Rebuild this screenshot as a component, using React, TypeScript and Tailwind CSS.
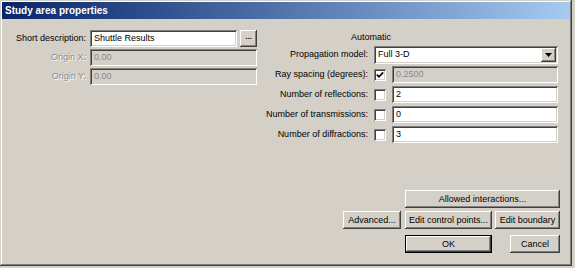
import React from 'react';

const raised =
  'shadow-[inset_-1px_-1px_0_#404040,inset_1px_1px_0_#ffffff,inset_-2px_-2px_0_#808080,inset_2px_2px_0_#d4d0c8]';
const sunken =
  'shadow-[inset_1px_1px_0_#808080,inset_-1px_-1px_0_#ffffff,inset_2px_2px_0_#404040,inset_-2px_-2px_0_#d4d0c8]';

function Field({ value, disabled, className }: { value: string; disabled?: boolean; className?: string }) {
  return (
    <div
      className={`h-[17px] flex items-center pl-[4px] ${sunken} ${
        disabled ? 'bg-[#d4d0c8] text-[#8a8a8a]' : 'bg-white text-black'
      } ${className ?? ''}`}
    >
      {value}
    </div>
  );
}

function Check({ checked }: { checked?: boolean }) {
  return (
    <div className={`w-[12px] h-[12px] bg-white flex items-center justify-center ${sunken}`}>
      {checked && (
        <svg width="8" height="8" viewBox="0 0 8 8">
          <polyline points="0.8,3.6 3,5.8 7.2,1.4" fill="none" stroke="#000" strokeWidth="1.7" />
        </svg>
      )}
    </div>
  );
}

function Btn({ label, w, isDefault }: { label: string; w: string; isDefault?: boolean }) {
  if (isDefault) {
    return (
      <div className={`${w} h-[18px] border border-black bg-[#d4d0c8]`}>
        <div className={`w-full h-full flex items-center justify-center ${raised}`}>{label}</div>
      </div>
    );
  }
  return (
    <div className={`${w} h-[18px] bg-[#d4d0c8] flex items-center justify-center ${raised}`}>{label}</div>
  );
}

export default function App() {
  return (
    <div className="w-[575px] h-[268px] bg-[#d4d0c8] text-[9px] text-black [font-family:'Liberation_Sans',Arial,sans-serif] leading-none">
      <div className="w-[572px] h-[266px] p-[2px] flex flex-col bg-[#d4d0c8] shadow-[inset_-1px_-1px_0_#404040,inset_1px_1px_0_#d4d0c8,inset_-2px_-2px_0_#808080,inset_2px_2px_0_#ffffff]">
        {/* title bar */}
        <div className="h-[17px] flex items-center pl-[3px] bg-gradient-to-r from-[#0a246a] to-[#a6caf0]">
          <span className="text-white font-bold text-[10px]">Study area properties</span>
        </div>

        <div className="flex-1 flex flex-col pr-[10px] pb-[11px]">
          <div className="flex">
            {/* left panel */}
            <div className="pt-[11px] grid grid-cols-[84px_167px] gap-x-[4px] gap-y-[2px] auto-rows-[17px]">
              <div className="flex items-center justify-end">Short description:</div>
              <div className="flex gap-[3px]">
                <Field value="Shuttle Results" className="w-[147px]" />
                <div className={`w-[17px] h-[17px] flex items-center justify-center font-bold text-[8px] pb-[3px] ${raised}`}>
                  ...
                </div>
              </div>
              <div className="flex items-center justify-end text-[#8a8a8a] [text-shadow:1px_1px_0_#ffffff]">Origin X:</div>
              <Field value="0.00" disabled className="w-[167px]" />
              <div className="flex items-center justify-end text-[#8a8a8a] [text-shadow:1px_1px_0_#ffffff]">Origin Y:</div>
              <Field value="0.00" disabled className="w-[167px]" />
            </div>

            {/* right panel */}
            <div className="pt-[11px] flex flex-col">
              <div className="h-[14px] flex items-center pl-[94px] mb-[2px]">Automatic</div>
              <div className="grid grid-cols-[111px_12px_166px] gap-x-[6px] gap-y-[3px] auto-rows-[17px] items-center">
                <div className="flex justify-end">Propagation model:</div>
                <div className={`col-span-2 h-[18px] bg-white flex items-center justify-between pl-[4px] pr-[2px] ${sunken}`}>
                  <span>Full 3-D</span>
                  <div className={`w-[15px] h-[14px] bg-[#d4d0c8] flex items-center justify-center ${raised}`}>
                    <svg width="7" height="4" viewBox="0 0 7 4">
                      <polygon points="0,0 7,0 3.5,4" fill="#000" />
                    </svg>
                  </div>
                </div>

                <div className="flex justify-end">Ray spacing (degrees):</div>
                <Check checked />
                <Field value="0.2500" disabled />

                <div className="flex justify-end">Number of reflections:</div>
                <Check />
                <Field value="2" />

                <div className="flex justify-end">Number of transmissions:</div>
                <Check />
                <Field value="0" />

                <div className="flex justify-end">Number of diffractions:</div>
                <Check />
                <Field value="3" />
              </div>
            </div>
          </div>

          <div className="flex-1" />

          {/* buttons */}
          <div className="flex flex-col items-end">
            <Btn label="Allowed interactions..." w="w-[155px]" />
            <div className="flex mt-[3px]">
              <Btn label="Advanced..." w="w-[58px]" />
              <div className="w-[4px]" />
              <Btn label="Edit control points..." w="w-[87px]" />
              <div className="w-[3px]" />
              <Btn label="Edit boundary" w="w-[65px]" />
            </div>
            <div className="flex mt-[6px]">
              <Btn label="OK" w="w-[87px]" isDefault />
              <div className="w-[18px]" />
              <Btn label="Cancel" w="w-[50px]" />
            </div>
          </div>
        </div>
      </div>
    </div>
  );
}
